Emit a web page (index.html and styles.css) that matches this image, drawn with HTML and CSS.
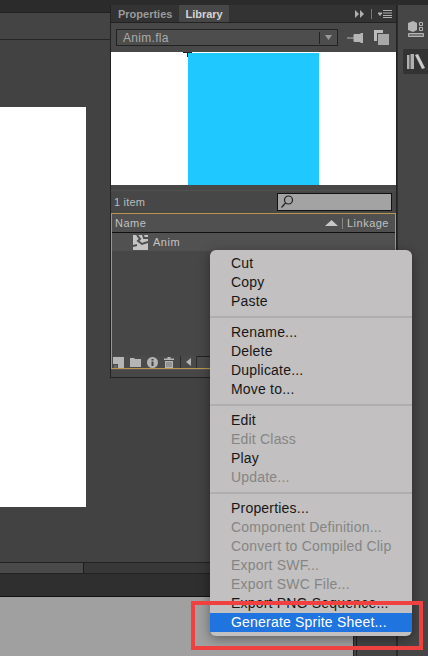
FILE: index.html
```html
<!DOCTYPE html>
<html lang="en">
<head>
<meta charset="UTF-8">
<meta name="viewport" content="width=device-width, initial-scale=1.0">
<title>Library panel</title>
<link rel="stylesheet" href="styles.css">
</head>
<body>

<div class="app">
  <div class="main">
    <div class="topbar"></div>
    <div class="stage">
      <div class="stage-head"></div>
      <div class="artboard"></div>
    </div>
    <div class="scrollbar">
      <div class="scroll-thumb"></div>
    </div>
    <div class="timeline-strip"></div>
    <div class="statusbar">
      <div class="status-grey"></div>
      <div class="status-side"></div>
    </div>
  </div>

  <div class="dock">
    <div class="dock-btn">
      <svg width="18" height="18" viewBox="0 0 18 18">
        <path d="M1 3l5-2 4 2v7l-4 2-5-2z" fill="#b5b5b5"/>
        <path d="M12.500 2.500h3v3h-3zM12.500 7.500h3v3h-3z" fill="none" stroke="#b5b5b5"/>
        <path d="M1.500 13.500h15v3h-15z" fill="#777" stroke="#b5b5b5"/>
      </svg>
    </div>
    <div class="dock-btn dock-btn-on">
      <svg width="19" height="15" viewBox="0 0 19 15">
        <path d="M0 1h2.500v14H0zM3.500 0H7v15H3.500z" fill="#b0b0b0"/>
        <path d="M8 1l3-1 7 14-3 1z" fill="#c8c8c8"/>
      </svg>
    </div>
  </div>
</div>

<div class="panel">
  <div class="tabs">
    <span class="tab">Properties</span>
    <span class="tab tab-on">Library</span>
    <div class="tab-tools">
      <svg width="10" height="8" viewBox="0 0 10 8"><path d="M0 0l4 4-4 4zM5 0l4 4-4 4z" fill="#b0b0b0"/></svg>
      <span class="tab-sep"></span>
      <svg width="14" height="8" viewBox="0 0 14 8"><path d="M0 3h4L2 5.500zM5 .5h9M5 3h9M5 5.500h9M5 7.500h9" fill="#b0b0b0" stroke="#b0b0b0" stroke-width="1"/></svg>
    </div>
  </div>

  <div class="docrow">
    <div class="docselect">
      <span class="docname">Anim.fla</span>
      <span class="doc-arrow"><svg width="7" height="5" viewBox="0 0 7 5"><path d="M0 0h7L3.500 5z" fill="#999"/></svg></span>
    </div>
    <svg class="pin" width="16" height="10" viewBox="0 0 16 10"><path d="M0 5h7M7 1.500h7v7H7zM14 0h1.500v10H14z" fill="#b5b5b5" stroke="#b5b5b5" stroke-width="1"/></svg>
    <svg width="15" height="15" viewBox="0 0 15 15"><path d="M0 0h9v3H3v8H0z" fill="#bdbdbd"/><path d="M4 4h11v11H4z" fill="#a8a8a8"/></svg>
  </div>

  <div class="preview">
    <span class="crosshair"></span>
    <div class="preview-sprite"></div>
  </div>

  <div class="countrow">
    <span>1 item</span>
    <div class="search">
      <svg width="14" height="15" viewBox="0 0 14 15"><circle cx="8.500" cy="6" r="4" fill="none" stroke="#222" stroke-width="1.200"/><path d="M5.500 9L1.500 13.500" stroke="#222" stroke-width="1.200"/></svg>
    </div>
  </div>

  <div class="listbox">
    <div class="listhead">
      <span class="col-name">Name</span>
      <svg width="13" height="6" viewBox="0 0 13 6"><path d="M0 6l6.500-6L13 6z" fill="#c8c8c8"/></svg>
      <span class="col-sep"></span>
      <span>Linkage</span>
    </div>
    <div class="listrow">
      <svg width="15" height="15" viewBox="0 0 15 15">
        <path d="M0 0h15v15H0z" fill="#c4c4c4"/>
        <path d="M4 0l3 4-2 2 4 3 6-2M10 0l1 3 4 0M0 11l4-1" fill="none" stroke="#4f4f4f" stroke-width="2"/>
      </svg>
      <span>Anim</span>
    </div>
    <div class="listfill"></div>
    <div class="listfoot">
      <svg width="11" height="11" viewBox="0 0 11 11"><path d="M0 0h11v11H5V7H0z" fill="#b5b5b5"/><path d="M1 8h3v3H1z" fill="#666"/></svg>
      <svg width="11" height="9" viewBox="0 0 11 9"><path d="M0 0h4l1 1h6v8H0z" fill="#b5b5b5"/></svg>
      <svg width="11" height="11" viewBox="0 0 11 11"><circle cx="5.500" cy="5.500" r="5.500" fill="#b5b5b5"/><path d="M4.500 2h2v1.500h-2zM4.500 4.500h2V9h-2z" fill="#444"/></svg>
      <svg width="10" height="11" viewBox="0 0 10 11"><path d="M0 1.500h10V3H0zM3.500 0h3v1.500h-3zM1 4h8v7H1z" fill="#b5b5b5"/><path d="M3 5v5M5 5v5M7 5v5" stroke="#555" stroke-width=".7"/></svg>
      <div class="foot-scroll">
        <span class="foot-left"><svg width="5" height="8" viewBox="0 0 5 8"><path d="M5 0v8L0 4z" fill="#b5b5b5"/></svg></span>
        <span class="foot-track"></span>
      </div>
    </div>
  </div>
  <div class="panel-foot"></div>
</div>

<ul class="menu">
  <li>Cut</li>
  <li>Copy</li>
  <li>Paste</li>
  <li class="sep"></li>
  <li>Rename...</li>
  <li>Delete</li>
  <li>Duplicate...</li>
  <li>Move to...</li>
  <li class="sep"></li>
  <li>Edit</li>
  <li class="off">Edit Class</li>
  <li>Play</li>
  <li class="off">Update...</li>
  <li class="sep"></li>
  <li>Properties...</li>
  <li class="off">Component Definition...</li>
  <li class="off">Convert to Compiled Clip</li>
  <li class="off">Export SWF...</li>
  <li class="off">Export SWC File...</li>
  <li>Export PNG Sequence...</li>
  <li class="on">Generate Sprite Sheet...</li>
</ul>

<div class="callout"></div>

</body>
</html>
```

FILE: styles.css
```css
html, body {
  margin: 0;
  padding: 0;
  height: 100%;
  overflow: hidden;
}
body {
  font-family: "Liberation Sans", Arial, sans-serif;
  background-color: #424242;
  position: relative;
}
.app {
  display: flex;
  height: 656px;
}
.main {
  width: 396px;
  display: flex;
  flex-direction: column;
}
.topbar {
  height: 12px;
  background-color: #2b2b2b;
  border-bottom: 1px solid #222;
}
.stage {
  height: 549px;
  background-color: #424242;
}
.stage-head {
  height: 26px;
  border-bottom: 1px solid #262626;
  background-color: #444;
}
.artboard {
  width: 86px;
  height: 400px;
  margin-top: 67px;
  background-color: #fff;
}
.scrollbar {
  height: 12px;
  background-color: #383838;
  border-top: 1px solid #222;
  border-bottom: 1px solid #222;
  box-sizing: border-box;
}
.scroll-thumb {
  width: 83px;
  height: 10px;
  background-color: #4a4a4a;
  border-right: 1px solid #1c1c1c;
}
.timeline-strip {
  height: 23px;
  background-color: #2f2f2f;
  border-bottom: 1px solid #111;
  box-sizing: border-box;
}
.statusbar {
  flex: 1;
  display: flex;
}
.status-grey {
  width: 353px;
  background-color: #a0a0a0;
}
.status-side {
  flex: 1;
  background-color: #444;
  border-left: 1px solid #222;
  box-shadow: inset 2px 0 0 #444, inset 3px 0 0 #222;
}
.dock {
  flex: 1;
  background-color: #464646;
  border-left: 2px solid #2c2c2c;
  border-top: 5px solid #2b2b2b;
  display: flex;
  flex-direction: column;
  align-items: flex-end;
}
.dock-btn {
  width: 25px;
  height: 26px;
  margin-top: 15px;
  padding-left: 1px;
  box-sizing: border-box;
  display: flex;
  justify-content: center;
}
.dock-btn-on {
  margin-top: 3px;
  height: 25px;
  align-items: center;
  background-color: #333;
  border-radius: 2px 0 0 2px;
}

/* library panel, floats over the stage */
.panel {
  position: absolute;
  left: 110px;
  top: 5px;
  width: 287px;
  height: 373px;
  background-color: #474747;
  border-left: 1px solid #222;
  border-right: 1px solid #222;
  border-bottom: 1px solid #222;
  box-sizing: border-box;
  display: flex;
  flex-direction: column;
  color: #c4c4c4;
  font-size: 11px;
  font-weight: bold;
}
.panel > div {
  flex-shrink: 0;
}
.tabs {
  display: flex;
  height: 17px;
  background-color: #333;
  border-bottom: 1px solid #222;
}
.tab {
  padding: 0 7px;
  line-height: 18px;
  color: #9a9a9a;
}
.tab-on {
  padding: 0 6px 0 6px;
  background-color: #474747;
  color: #d4d4d4;
}
.tab-tools {
  margin-left: auto;
  display: flex;
  align-items: center;
  gap: 6px;
  padding-right: 4px;
}
.tab-sep {
  width: 1px;
  height: 10px;
  background-color: #777;
}
.docrow {
  display: flex;
  align-items: center;
  height: 29px;
  padding-left: 5px;
  background-color: #484848;
}
.docselect {
  width: 214px;
  height: 15px;
  display: flex;
  align-items: center;
  justify-content: space-between;
  background-color: #4d4d4d;
  border: 1px solid #222;
  font-weight: normal;
  font-size: 12px;
  letter-spacing: 0.3px;
  color: #aaa;
  padding-left: 6px;
  margin-right: 9px;
}
.doc-arrow {
  width: 17px;
  height: 12px;
  display: flex;
  justify-content: center;
  align-items: center;
  border-left: 1px solid #222;
}
.pin {
  margin-right: 11px;
}
.preview {
  position: relative;
  height: 133px;
  background-color: #fff;
  display: flex;
  justify-content: center;
}
.preview-sprite {
  width: 131px;
  margin-top: 1px;
  background-color: #1fc8ff;
}
.crosshair {
  position: absolute;
  left: 72px;
  top: 0;
  width: 9px;
  height: 5px;
  background: linear-gradient(#222, #222) center top / 9px 1px no-repeat,
              linear-gradient(#222, #222) center top / 1px 5px no-repeat;
}
.countrow {
  display: flex;
  align-items: center;
  justify-content: space-between;
  height: 23px;
  margin-top: 5px;
  padding: 0 4px 0 3px;
  font-weight: normal;
  letter-spacing: 0.2px;
  border-top: 1px solid #505050;
  box-sizing: border-box;
  color: #bbb;
}
.search {
  width: 113px;
  height: 16px;
  background-color: #a3a3a3;
  border: 1px solid #111;
}
.search svg {
  margin-left: 2px;
  display: block;
}
.listbox {
  height: 156px;
  border: 1px solid #b8964e;
  box-sizing: border-box;
  display: flex;
  flex-direction: column;
}
.listhead {
  display: flex;
  align-items: center;
  gap: 4px;
  height: 18px;
  padding: 0 6px 0 3px;
  background-color: #505050;
  border-bottom: 1px solid #111;
  font-weight: normal;
  letter-spacing: 0.5px;
  color: #c0c0c0;
}
.col-name {
  margin-right: auto;
}
.col-sep {
  width: 1px;
  height: 11px;
  background-color: #888;
}
.listrow {
  display: flex;
  align-items: center;
  gap: 5px;
  height: 18px;
  padding-left: 21px;
  background-color: #515151;
  font-weight: normal;
  letter-spacing: 0.5px;
  color: #c4c4c4;
}
.listfill {
  flex: 1;
}
.listfoot {
  display: flex;
  align-items: center;
  gap: 6px;
  height: 12px;
  padding-left: 1px;
  background-color: #4a4a4a;
}
.foot-scroll {
  flex: 1;
  display: flex;
  height: 12px;
}
.foot-left {
  width: 15px;
  display: flex;
  align-items: center;
  justify-content: center;
  border-left: 1px solid #2c2c2c;
  border-right: 1px solid #2c2c2c;
}
.foot-track {
  flex: 1;
  background-color: #4c4c4c;
  border-top: 1px solid #222;
}
.panel-foot {
  flex: 1;
  border-top: 1px solid #555;
}

/* context menu */
.menu {
  position: absolute;
  left: 210px;
  top: 250px;
  width: 202px;
  height: 386px;
  margin: 0;
  padding: 4px 0 0;
  box-sizing: border-box;
  list-style: none;
  background-color: #c2c0c0;
  border-radius: 6px;
  box-shadow: 0 3px 12px rgba(0, 0, 0, 0.4);
  font-size: 14px;
  letter-spacing: 0.2px;
  color: #171717;
}
.menu li {
  height: 19px;
  line-height: 19px;
  padding-left: 21px;
  white-space: nowrap;
}
.menu .sep {
  height: 2px;
  padding: 0;
  margin: 5px 0;
  background-color: #aeaeae;
}
.menu .off {
  color: #858585;
}
.menu .on {
  background-color: #1f74e0;
  color: #fff;
}
.callout {
  position: absolute;
  left: 191px;
  top: 601px;
  width: 232px;
  height: 49px;
  box-sizing: border-box;
  border: 4px solid #f04040;
}
```
